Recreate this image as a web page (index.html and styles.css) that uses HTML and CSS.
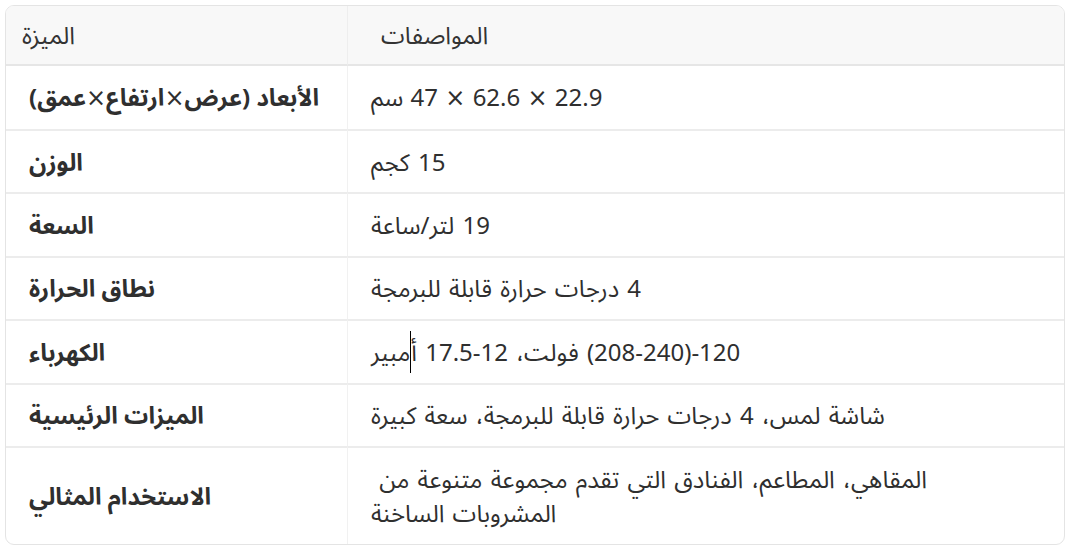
FILE: index.html
```html
<!DOCTYPE html>
<html lang="ar">
<head>
<meta charset="utf-8">
<title>المواصفات</title>
<link rel="stylesheet" href="styles.css">
</head>
<body>
<div class="wrap">
<table class="spec">
  <thead>
    <tr>
      <th class="h-feat">الميزة</th>
      <th class="h-spec">المواصفات</th>
    </tr>
  </thead>
  <tbody>
    <tr class="first"><td class="feat">الأبعاد (عرض<span class="x">×</span>ارتفاع<span class="x">×</span>عمق)</td><td class="val dims">22.9 <span class="x">×</span> 62.6 <span class="x">×</span> 47 سم</td></tr>
    <tr><td class="feat">الوزن</td><td class="val">15 كجم</td></tr>
    <tr><td class="feat">السعة</td><td class="val">19 لتر/ساعة</td></tr>
    <tr><td class="feat">نطاق الحرارة</td><td class="val">4 درجات حرارة قابلة للبرمجة</td></tr>
    <tr><td class="feat">الكهرباء</td><td class="val"><bdo dir="ltr">(208-240)-120</bdo> فولت، <bdo dir="ltr">17.5-12</bdo> أ<span class="caret"></span>مبير</td></tr>
    <tr><td class="feat">الميزات الرئيسية</td><td class="val">شاشة لمس، 4 درجات حرارة قابلة للبرمجة، سعة كبيرة</td></tr>
    <tr class="tall"><td class="feat">الاستخدام المثالي</td><td class="val">المقاهي، المطاعم، الفنادق التي تقدم مجموعة متنوعة من&nbsp;<br>المشروبات الساخنة</td></tr>
  </tbody>
</table>
</div>
</body>
</html>
```
FILE: styles.css
```css
html, body {
  margin: 0;
  padding: 0;
  background: #ffffff;
}
body {
  font-family: "Noto Sans", "Noto Sans Arabic", "Noto Sans Arabic UI", "DejaVu Sans", sans-serif;
  color: #2f2f2f;
}
.wrap {
  padding: 5px 1px 0 5px;
}
.spec {
  width: 1060px;
  border-collapse: separate;
  border-spacing: 0;
  border: 1px solid #e4e4e4;
  border-radius: 9px;
  overflow: hidden;
  font-size: 24px;
  line-height: 34px;
}
.spec th, .spec td {
  text-align: left;
  unicode-bidi: plaintext;
  vertical-align: middle;
  padding-top: 0;
  padding-bottom: 0;
}
.spec th {
  background: #f8f8f8;
  font-weight: 400;
  color: #333;
  height: 58px;
  border-bottom: 2px solid #e6e6e6;
}
.spec .h-feat {
  width: 324px;
  padding-left: 16px;
  border-right: 1px solid #eeeeee;
}
.spec .h-spec {
  padding-left: 33px;
}
.spec td {
  height: 61.4px;
  border-top: 2px solid #ececec;
}
.spec .first td {
  border-top: 0;
  height: 63px;
}
.spec .tall td {
  height: 96px;
}
.spec .feat {
  font-weight: 700;
  padding-left: 23px;
  border-right: 1px solid #f1f1f1;
}
.spec .val {
  padding-left: 23px;
  word-spacing: 2px;
}
.spec .dims {
  word-spacing: 1px;
}
.x {
  font-family: "DejaVu Sans", sans-serif;
  font-weight: 400;
}
.caret {
  display: inline-block;
  width: 1px;
  height: 42px;
  background: #000;
  vertical-align: -12px;
}
```
